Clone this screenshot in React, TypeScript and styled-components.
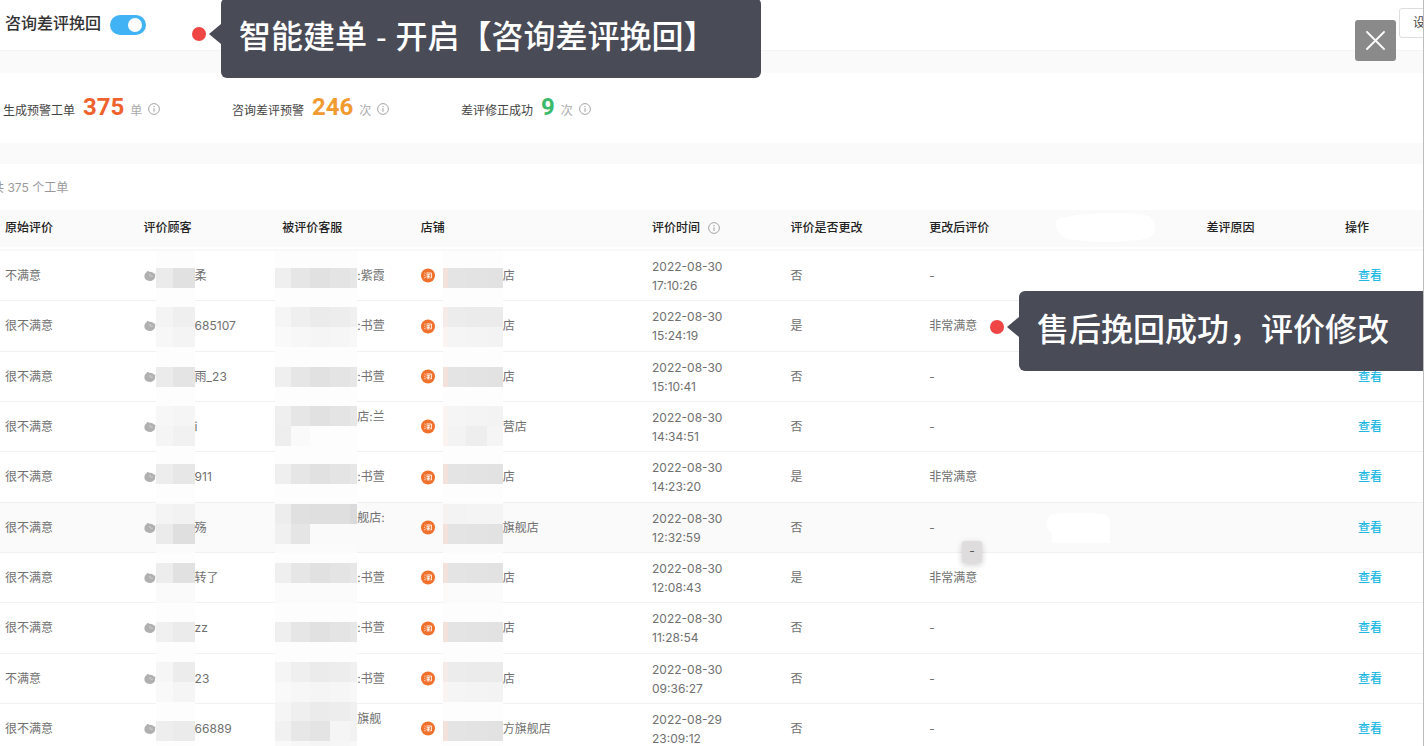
import React from "react";
import styled, { createGlobalStyle, css } from "styled-components";

const Global = createGlobalStyle`
  * { box-sizing: border-box; }
  body {
    margin: 0;
    background: #fff;
    color: #333;
    font: 12px/20px Inter, "Noto Sans CJK SC", sans-serif;
  }
  button, input { font: inherit; }
`;

const Frame = styled.main`
  position: relative;
  height: 100vh;
  margin-right: 2px;
  border-right: 1px solid #bdbdbd;
  overflow: hidden;
  background: #fff;
`;

const Toolbar = styled.header`
  display: flex;
  align-items: center;
  justify-content: space-between;
  height: 51px;
  padding: 0 0 4px 5px;
  border-bottom: 1px solid #f3f3f3;
`;

const SwitchLabel = styled.label`
  display: flex;
  align-items: center;
  gap: 9px;
  font-size: 16px;
  font-weight: 500;
  color: #333;
`;

const Switch = styled.input`
  appearance: none;
  width: 36px;
  height: 20px;
  margin: 4px 0 0;
  padding: 3px;
  border-radius: 10px;
  background: #41b3f4;
  &::before {
    content: "";
    display: block;
    width: 14px;
    height: 14px;
    margin-left: 15px;
    border-radius: 50%;
    background: #fff;
  }
`;

const SettingsButton = styled.button`
  flex: none;
  height: 30px;
  margin-right: -28px;
  padding: 0 13px;
  border: 1px solid #ddd;
  border-radius: 3px;
  background: #fff;
  color: #444;
`;

const Band = styled.div<{ $size: number }>`
  height: ${(p) => p.$size}px;
  background: #fafafa;
`;

const Stats = styled.section`
  display: grid;
  grid-template-columns: repeat(3, 229px);
  height: 70px;
  padding: 18px 0 0 3px;
`;

const Stat = styled.div`
  display: flex;
  align-items: baseline;
  color: #444;
`;

const Figure = styled.strong<{ $color: string }>`
  margin: 0 6px 0 8px;
  font: 700 24px/32px Roboto, sans-serif;
  color: ${(p) => p.$color};
`;

const Unit = styled.span`
  margin-right: 6px;
  color: #aaa;
`;

const InfoSvg = styled.svg`
  flex: none;
  width: 12px;
  height: 12px;
  margin-bottom: -3px;
  color: #a5a5a5;
  th & {
    margin: 0 0 0 8px;
    vertical-align: -2px;
  }
`;

const Count = styled.p`
  height: 46px;
  margin: 0 0 0 -8px;
  padding-top: 14px;
  color: #999;
`;

const Table = styled.table`
  width: 100%;
  table-layout: fixed;
  border-collapse: separate;
  border-spacing: 0;
`;

const Col = styled.col<{ $wide?: boolean }>`
  width: ${(p) => (p.$wide ? "16.25%" : "9.74%")};
`;

const HeadCell = styled.th`
  height: 37px;
  padding: 0 0 2px 5px;
  background: #fafafa;
  text-align: left;
  font-weight: 500;
  color: #222;
  white-space: nowrap;
`;

const Spacer = styled.td`
  height: 4px;
  padding: 0;
  border-bottom: 2px solid #f8f8f8;
`;

const Row = styled.tr<{ $active: boolean }>`
  background: ${(p) => (p.$active ? "#fafafa" : "#fff")};
`;

const Cell = styled.td<{ $tall: boolean }>`
  height: ${(p) => (p.$tall ? 51 : 50)}px;
  padding: 0 0 0 5px;
  border-bottom: 1px solid #f1f1f1;
  color: #707070;
  white-space: nowrap;
`;

const Line = styled.div`
  display: flex;
  align-items: center;
`;

const Suffix = styled.span<{ $upper?: boolean }>`
  ${(p) => p.$upper && css`margin-bottom: 20px;`}
`;

const Stamp = styled.time`
  display: block;
  width: 80px;
  line-height: 19px;
  white-space: normal;
`;

const MosaicSvg = styled.svg<{ $pull: number }>`
  flex: none;
  display: block;
  margin: 0 0 -1px ${(p) => p.$pull}px;
`;

const AvatarSvg = styled.svg`
  flex: none;
  width: 12px;
  height: 12px;
`;

const ShopSvg = styled.svg`
  flex: none;
  width: 15px;
  height: 15px;
`;

const ViewLink = styled.a`
  padding-left: 13px;
  color: #22b8e2;
  font-weight: 500;
  text-decoration: none;
`;

const HeadPatch = styled.svg`
  display: block;
  width: 100px;
  height: 29px;
  margin-left: -12px;
`;

const RowPatch = styled.svg`
  display: block;
  width: 65px;
  height: 30px;
  margin-left: -22px;
`;

const Callout = styled.div<{ $x: string; $y: number; $right: string }>`
  position: absolute;
  z-index: 2;
  left: ${(p) => p.$x};
  right: ${(p) => p.$right};
  top: ${(p) => p.$y}px;
  display: flex;
  align-items: center;
  height: 80px;
  padding: 0 0 2px 18px;
  border-radius: 6px;
  background: #494b57;
  color: #fff;
  font: 500 32px/48px "Liberation Sans", "Noto Sans CJK SC", sans-serif;
  white-space: nowrap;
  &::before {
    content: "";
    position: absolute;
    left: -12px;
    top: 26px;
    border: solid transparent;
    border-width: 10px 12px 10px 0;
    border-right-color: #494b57;
  }
  &::after {
    content: "";
    position: absolute;
    left: -29px;
    top: 29px;
    width: 14px;
    height: 14px;
    border-radius: 50%;
    background: #ef4545;
  }
`;

const CloseButton = styled.button`
  position: absolute;
  z-index: 3;
  top: 20px;
  right: 27px;
  display: grid;
  place-items: center;
  width: 41px;
  height: 41px;
  padding: 0;
  border: 0;
  border-radius: 3px;
  background: #8a8a8a;
`;

const DragChip = styled.span`
  position: absolute;
  z-index: 1;
  left: 962px;
  top: 541px;
  width: 20px;
  height: 22px;
  border-radius: 3px;
  background: #dedcdd;
  box-shadow: 0 2px 6px rgba(0, 0, 0, 0.2);
  text-align: center;
  color: #555;
`;

function Info() {
  return (
    <InfoSvg viewBox="0 0 12 12" fill="none" stroke="currentColor" aria-hidden="true">
      <circle cx="6" cy="6" r="5.4" strokeWidth="1" />
      <path d="M6 5.2v3.6M6 3v1.2" strokeWidth="1.1" />
    </InfoSvg>
  );
}

function Avatar() {
  return (
    <AvatarSvg viewBox="0 0 12 12" aria-hidden="true">
      <path d="M.4 6C.6 3.400 2 2.400 2.600 2.300L3.300.8l2 1c2-.4 3.700.4 4.500 1.700l1.700.300-.4 1.600c.4 3.200-2.100 5.500-5.100 5.500C2.400 10.900.2 8.800.4 6z" fill="#b0b0b0" />
      <path d="M6 4c-.2 2 .9 2.800 2.700 2.200" fill="none" stroke="#e0e0e0" strokeWidth=".8" />
    </AvatarSvg>
  );
}

function ShopIcon() {
  return (
    <ShopSvg viewBox="0 0 15 15" aria-hidden="true">
      <circle cx="7" cy="7.500" r="7" fill="#f0702c" />
      <path d="M3.500 4.900l1 .7M3.300 7.200l1 .6M3.500 10.200l1-1.400M5.500 5h4.900v4.900H9.300M5.500 6.700h3.600M5.500 8.300h3.600M7.300 6.700v3M5.800 9.900h2.900" fill="none" stroke="#fff" strokeWidth=".9" />
    </ShopSvg>
  );
}

type Tiles = { top: number; bands: string[][] };

type MosaicProps = { spans: number[]; tiles: Tiles; height: number; base: string; pull?: number };

/* Privacy mosaic: bands of grey tiles, 20px tall each. */
function Mosaic({ spans, tiles, height, base, pull = 0 }: MosaicProps) {
  const width = spans.reduce((a, b) => a + b, 0);
  return (
    <MosaicSvg width={width} height={height} $pull={pull} shapeRendering="crispEdges" aria-hidden="true">
      <rect width={width} height={height} fill={base} />
      {tiles.bands.map((band, r) => {
        let x = 0;
        return band.map((fill, c) => {
          const left = x;
          x += spans[c];
          return <rect key={`${r}-${c}`} x={left} y={tiles.top + r * 20} width={spans[c]} height={20} fill={fill} />;
        });
      })}
    </MosaicSvg>
  );
}

const NAME_SPANS = [17, 22];
const AGENT_SPANS = [16, 19, 20, 20, 7];
const SHOP_SPANS = [5, 18, 21, 16];

const agentDark = ["#efefef", "#e6e6e6", "#e1e1e1", "#e4e4e4", "#e7e7e7"];
const agentMid = ["#f5f5f5", "#efefef", "#ebebeb", "#ededed", "#f0f0f0"];
const agentPale = ["#f9f9f9", "#f7f7f7", "#f5f5f5", "#f6f6f6", "#f8f8f8"];
const shopDark = ["#f3e2dc", "#e4e4e4", "#e3e3e3", "#e2e2e2"];
const shopMid = ["#f5ebe8", "#ececec", "#ebebeb", "#ebebeb"];
const shopPale = ["#faf5f3", "#f5f5f5", "#f4f4f4", "#f3f3f3"];

type Ticket = {
  rating: string;
  name: string;
  nameTiles: Tiles;
  agent: string;
  agentUpper?: boolean;
  agentTiles: Tiles;
  shop: string;
  shopTiles: Tiles;
  date: string;
  time: string;
  changed: string;
  after: string;
};

const tickets: Ticket[] = [
  {
    rating: "不满意", name: "柔", nameTiles: { top: 17, bands: [["#ebebeb", "#e1e1e1"]] },
    agent: ":紫霞", agentTiles: { top: 17, bands: [agentDark] },
    shop: "店", shopTiles: { top: 17, bands: [shopDark] },
    date: "2022-08-30", time: "17:10:26", changed: "否", after: "-",
  },
  {
    rating: "很不满意", name: "685107", nameTiles: { top: 6, bands: [["#f4f4f4", "#efefef"], ["#f7f7f7", "#f4f4f4"]] },
    agent: ":书萱", agentTiles: { top: 6, bands: [agentMid, agentPale] },
    shop: "店", shopTiles: { top: 6, bands: [shopMid, shopPale] },
    date: "2022-08-30", time: "15:24:19", changed: "是", after: "非常满意",
  },
  {
    rating: "很不满意", name: "雨_23", nameTiles: { top: 15, bands: [["#ebebeb", "#e4e4e4"]] },
    agent: ":书萱", agentTiles: { top: 15, bands: [agentDark] },
    shop: "店", shopTiles: { top: 15, bands: [shopDark] },
    date: "2022-08-30", time: "15:10:41", changed: "否", after: "-",
  },
  {
    rating: "很不满意", name: "i", nameTiles: { top: 4, bands: [["#f7f7f7", "#f5f5f5"], ["#f5f5f5", "#f1f1f1"]] },
    agent: "店:兰", agentUpper: true,
    agentTiles: { top: 4, bands: [agentDark, ["#eeeeee", "#fafafa", "#fdfdfd", "#fdfdfd", "#fdfdfd"]] },
    shop: "营店", shopTiles: { top: 4, bands: [shopPale, ["#faf3f0", "#f3f3f3", "#eeeeee", "#f5f5f5"]] },
    date: "2022-08-30", time: "14:34:51", changed: "否", after: "-",
  },
  {
    rating: "很不满意", name: "911", nameTiles: { top: 12, bands: [["#ededed", "#e7e7e7"]] },
    agent: ":书萱", agentTiles: { top: 12, bands: [agentDark] },
    shop: "店", shopTiles: { top: 12, bands: [shopDark] },
    date: "2022-08-30", time: "14:23:20", changed: "是", after: "非常满意",
  },
  {
    rating: "很不满意", name: "殇", nameTiles: { top: 1, bands: [["#f4f4f4", "#f2f2f2"], ["#ebebeb", "#dfdfdf"]] },
    agent: "舰店:", agentUpper: true,
    agentTiles: { top: 1, bands: [["#ededed", "#e0e0e0", "#dfdfdf", "#dfdfdf", "#dadada"], ["#f0f0f0", "#e5e5e5", "#fafafa", "#fafafa", "#fafafa"]] },
    shop: "旗舰店", shopTiles: { top: 1, bands: [["#f6f2f1", "#f3f3f3", "#f4f4f4", "#f4f4f4"], shopDark] },
    date: "2022-08-30", time: "12:32:59", changed: "否", after: "-",
  },
  {
    rating: "很不满意", name: "转了", nameTiles: { top: 10, bands: [["#ededed", "#e1e1e1"], ["#fafafa", "#fafafa"]] },
    agent: ":书萱", agentTiles: { top: 10, bands: [agentDark, ["#fbfbfb", "#fbfbfb", "#fbfbfb", "#fbfbfb", "#fbfbfb"]] },
    shop: "店", shopTiles: { top: 10, bands: [shopDark, ["#fcfaf9", "#fbfbfb", "#fbfbfb", "#fbfbfb"]] },
    date: "2022-08-30", time: "12:08:43", changed: "是", after: "非常满意",
  },
  {
    rating: "很不满意", name: "zz", nameTiles: { top: 19, bands: [["#f0f0f0", "#ebebeb"]] },
    agent: ":书萱", agentTiles: { top: 19, bands: [agentDark] },
    shop: "店", shopTiles: { top: 19, bands: [shopDark] },
    date: "2022-08-30", time: "11:28:54", changed: "否", after: "-",
  },
  {
    rating: "不满意", name: "23", nameTiles: { top: 8, bands: [["#f6f6f6", "#ececec"], ["#f9f9f9", "#f5f5f5"]] },
    agent: ":书萱", agentTiles: { top: 8, bands: [agentMid, agentPale, agentMid] },
    shop: "店", shopTiles: { top: 8, bands: [shopMid, shopPale] },
    date: "2022-08-30", time: "09:36:27", changed: "否", after: "-",
  },
  {
    rating: "很不满意", name: "66889", nameTiles: { top: 17, bands: [["#eeeeee", "#ebebeb"]] },
    agent: "旗舰", agentUpper: true,
    agentTiles: { top: -3, bands: [agentMid, ["#f1f1f1", "#e7e7e7", "#e4e4e4", "#f5f5f5", "#f2f2f2"], agentPale] },
    shop: "方旗舰店", shopTiles: { top: 17, bands: [shopDark] },
    date: "2022-08-29", time: "23:09:12", changed: "否", after: "-",
  },
];

const stats = [
  { label: "生成预警工单", value: "375", unit: "单", color: "#f0622d" },
  { label: "咨询差评预警", value: "246", unit: "次", color: "#f19a30" },
  { label: "差评修正成功", value: "9", unit: "次", color: "#3cba6c" },
];

export default function App() {
  return (
    <>
      <Global />
      <Frame>
        <Toolbar>
          <SwitchLabel>
            咨询差评挽回
            <Switch type="checkbox" role="switch" defaultChecked />
          </SwitchLabel>
          <SettingsButton type="button">设置</SettingsButton>
        </Toolbar>
        <Band $size={22} />
        <Stats>
          {stats.map((s) => (
            <Stat key={s.label}>
              {s.label}
              <Figure $color={s.color}>{s.value}</Figure>
              <Unit>{s.unit}</Unit>
              <Info />
            </Stat>
          ))}
        </Stats>
        <Band $size={21} />
        <Count>共 375 个工单</Count>
        <Table>
          <colgroup>
            <Col /><Col /><Col /><Col $wide /><Col /><Col /><Col /><Col /><Col />
            <col />
          </colgroup>
          <thead>
            <tr>
              <HeadCell>原始评价</HeadCell>
              <HeadCell>评价顾客</HeadCell>
              <HeadCell>被评价客服</HeadCell>
              <HeadCell>店铺</HeadCell>
              <HeadCell>评价时间<Info /></HeadCell>
              <HeadCell>评价是否更改</HeadCell>
              <HeadCell>更改后评价</HeadCell>
              <HeadCell>
                <HeadPatch viewBox="0 0 100 29" aria-hidden="true">
                  <path d="M1 6c25-7 72-8 92-3 8 5 8 16 0 22-22 5-65 5-84 0C0 20-1 12 1 6z" fill="#fff" />
                </HeadPatch>
              </HeadCell>
              <HeadCell>差评原因</HeadCell>
              <HeadCell>操作</HeadCell>
            </tr>
          </thead>
          <tbody>
            <tr><Spacer colSpan={10} /></tr>
            {tickets.map((t, i) => {
              const tall = i % 3 === 1;
              const active = i === 5;
              const height = tall ? 51 : 50;
              const base = active ? "#fbfbfb" : "#fdfdfd";
              return (
                <Row key={t.time} $active={active}>
                  <Cell $tall={tall}>{t.rating}</Cell>
                  <Cell $tall={tall}>
                    <Line>
                      <Avatar />
                      <Mosaic spans={NAME_SPANS} tiles={t.nameTiles} height={height} base={base} />
                      <Suffix>{t.name}</Suffix>
                    </Line>
                  </Cell>
                  <Cell $tall={tall}>
                    <Line>
                      <Mosaic spans={AGENT_SPANS} tiles={t.agentTiles} height={height} base={base} pull={-7} />
                      <Suffix $upper={t.agentUpper}>{t.agent}</Suffix>
                    </Line>
                  </Cell>
                  <Cell $tall={tall}>
                    <Line>
                      <ShopIcon />
                      <Mosaic spans={SHOP_SPANS} tiles={t.shopTiles} height={height} base={base} pull={7} />
                      <Suffix>{t.shop}</Suffix>
                    </Line>
                  </Cell>
                  <Cell $tall={tall}><Stamp>{t.date} {t.time}</Stamp></Cell>
                  <Cell $tall={tall}>{t.changed}</Cell>
                  <Cell $tall={tall}>{t.after}</Cell>
                  <Cell $tall={tall}>
                    {active && (
                      <RowPatch viewBox="0 0 65 30" aria-hidden="true">
                        <path d="M6 20C-2 16-1 3 8 1c14-1.500 36-1.500 48 0 6 1 8 4 8 10v19H6z" fill="#fff" />
                      </RowPatch>
                    )}
                  </Cell>
                  <Cell $tall={tall} />
                  <Cell $tall={tall}><ViewLink href="#">查看</ViewLink></Cell>
                </Row>
              );
            })}
          </tbody>
        </Table>
        <DragChip>-</DragChip>
        <Callout $x="221px" $right="calc(100% - 761px)" $y={-2}>智能建单 - 开启【咨询差评挽回】</Callout>
        <Callout $x="1019px" $right="-6px" $y={291}>售后挽回成功，评价修改</Callout>
        <CloseButton type="button" aria-label="关闭">
          <svg width="19" height="19" viewBox="0 0 19 19" stroke="#fff" strokeWidth="1.800" strokeLinecap="round" aria-hidden="true">
            <path d="M1 1l17 17M18 1L1 18" />
          </svg>
        </CloseButton>
      </Frame>
    </>
  );
}
